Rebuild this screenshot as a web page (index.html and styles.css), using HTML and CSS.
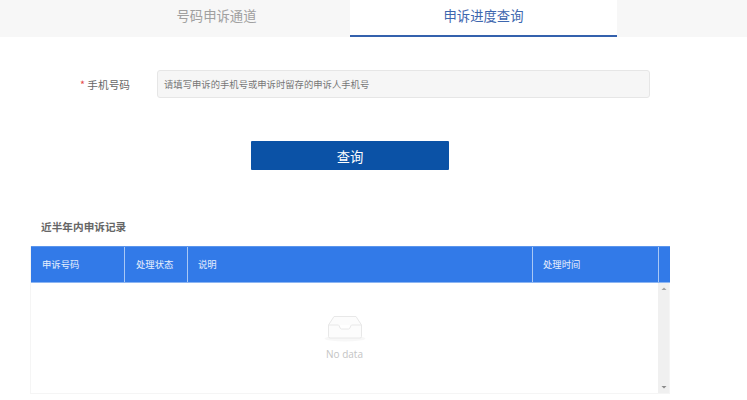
FILE: index.html
```html
<!DOCTYPE html>
<html lang="zh">
<head>
<meta charset="utf-8">
<title>申诉进度查询</title>
<link rel="stylesheet" href="styles.css">
</head>
<body>
<nav class="tabs">
  <a class="tab">号码申诉通道</a>
  <a class="tab tab-active">申诉进度查询</a>
</nav>
<form class="form">
  <div class="field">
    <label class="field-label"><span class="req">*</span> 手机号码</label>
    <div class="input">请填写申诉的手机号或申诉时留存的申诉人手机号</div>
  </div>
  <div class="actions"><button type="button" class="btn">查询</button></div>
</form>
<section class="records">
  <h2 class="records-title">近半年内申诉记录</h2>
  <div class="table">
    <div class="thead">
      <div class="th th-id">申诉号码</div>
      <div class="th th-status">处理状态</div>
      <div class="th th-desc">说明</div>
      <div class="th th-time">处理时间</div>
      <div class="th th-gutter"></div>
    </div>
    <div class="tbody">
      <div class="empty">
        <svg class="empty-icon" width="42" height="28" viewBox="0 0 42 28" aria-hidden="true">
          <ellipse cx="21" cy="24.500" rx="20.500" ry="3" fill="#f7f7f7"/>
          <path d="M4.500 11 L10 2.500 H32 L37.500 11 V22.500 A1.500 1.500 0 0 1 36 24 H6 A1.500 1.500 0 0 1 4.500 22.500 Z" fill="#fcfcfc" stroke="#e8e8e8"/>
          <path d="M4.500 11 H14.500 C15.500 11 15.500 15 17.500 15 H24.500 C26.500 15 26.500 11 27.500 11 H37.500" fill="#fff" stroke="#e8e8e8"/>
        </svg>
        <p class="empty-text">No data</p>
      </div>
      <div class="scrollbar">
        <svg class="arrow" width="12" height="12" viewBox="0 0 12 12" aria-hidden="true"><path d="M3.500 7 L6 4.500 L8.500 7 Z" fill="#a3a3a3"/></svg>
        <svg class="arrow" width="12" height="12" viewBox="0 0 12 12" aria-hidden="true"><path d="M3.500 5 L6 7.500 L8.500 5 Z" fill="#8a8a8a"/></svg>
      </div>
    </div>
  </div>
</section>
</body>
</html>
```
FILE: styles.css
```css
* { box-sizing: border-box; }
html, body { margin: 0; padding: 0; }
body {
  width: 747px;
  height: 400px;
  overflow: hidden;
  background: #fff;
  font-family: "Noto Sans CJK SC", "Liberation Sans", sans-serif;
  color: #666;
}
.tabs {
  display: flex;
  height: 37px;
  padding-left: 83px;
  background: #f7f7f7;
}
.tab {
  width: 267px;
  height: 37px;
  line-height: 32px;
  text-align: center;
  font-size: 13.330px;
  color: #a0a0a0;
}
.tab-active {
  background: #fff;
  border-bottom: 2px solid #3461ad;
  color: #3d66ae;
}
.form { padding-top: 33px; }
.field {
  display: flex;
  align-items: center;
  height: 28px;
}
.field-label {
  width: 130px;
  text-align: right;
  font-size: 10.670px;
  color: #666;
}
.req { color: #e5484d; }
.input {
  margin-left: 27px;
  width: 493px;
  height: 28px;
  line-height: 27px;
  padding-left: 6px;
  background: #f6f6f6;
  border: 1px solid #e6e6e6;
  border-radius: 3px;
  font-size: 9.330px;
  color: #777;
}
.actions {
  display: flex;
  padding: 43px 0 0 251px;
}
.btn {
  width: 198px;
  height: 29px;
  padding: 2px 0 0;
  border: 0;
  border-radius: 1px;
  background: #0b52a6;
  color: #fff;
  font-family: inherit;
  font-size: 13.330px;
}
.records { padding: 0 0 0 30px; }
.records-title {
  margin: 47px 0 0 11px;
  height: 29px;
  line-height: 19px;
  font-size: 10.670px;
  font-weight: 700;
  color: #666;
}
.table {
  width: 640px;
  height: 148px;
  border: 1px solid #f5f5f5;
  border-top: 0;
}
.thead {
  display: flex;
  height: 37px;
  margin: 0 -1px 0 0;
  background: #327ae8;
  border-top: 1px solid #5b95ec;
  border-bottom: 1px solid #8cb5f2;
}
.th {
  padding-left: 11px;
  line-height: 35px;
  font-size: 9.330px;
  color: #e8f0fd;
  border-right: 1px solid #a9c8f5;
}
.th-id { width: 94px; }
.th-status { width: 63px; }
.th-desc { width: 345px; padding-left: 10px; }
.th-time { width: 126px; padding-left: 10px; }
.th-gutter { flex: 1; border-right: 0; padding: 0; }
.tbody {
  display: flex;
  height: 110px;
}
.empty {
  flex: 1;
  padding-top: 31px;
  display: flex;
  flex-direction: column;
  align-items: center;
}
.empty-icon { display: block; }
.empty-text {
  margin: 5px 0 0;
  font-size: 10px;
  line-height: 14px;
  color: #c4c4c4;
  font-family: "Open Sans", "Liberation Sans", sans-serif;
}
.scrollbar {
  width: 11px;
  background: #f0f0f0;
  display: flex;
  flex-direction: column;
  justify-content: space-between;
  align-items: center;
}
.arrow { display: block; }
```
